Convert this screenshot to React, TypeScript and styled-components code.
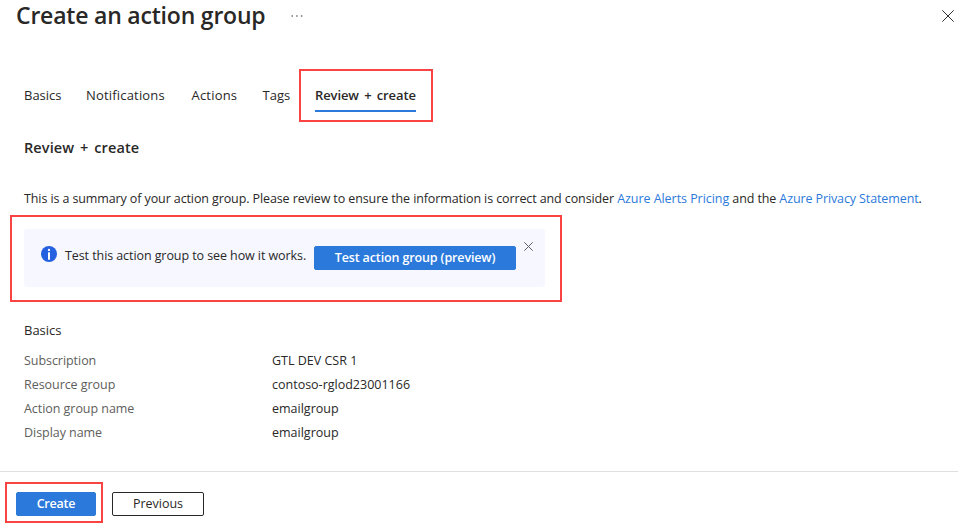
import React from 'react';
import styled, { createGlobalStyle } from 'styled-components';

const GlobalStyle = createGlobalStyle`
  * { box-sizing: border-box; }
  body {
    margin: 0;
    background: #fff;
    color: #292827;
    font-family: "Open Sans", "Noto Sans", sans-serif;
    font-size: 12.5px;
    overflow: hidden;
  }
`;

const Page = styled.main`
  position: relative;
  display: flex;
  flex-direction: column;
  width: 958px;
  height: 529px;
  overflow: hidden;
`;

const Header = styled.header`
  display: flex;
  align-items: center;
  height: 32px;
  padding: 0 4px 0 16px;
`;

const Title = styled.h1`
  width: 275px;
  margin: 0 0 2px;
  font-size: 23px;
  font-weight: 600;
  line-height: 30px;
  letter-spacing: -0.2px;
  white-space: nowrap;
`;

const IconButton = styled.button`
  display: flex;
  padding: 0;
  border: 0;
  background: none;
  color: #323130;
`;

const CloseButton = styled(IconButton)`
  margin-left: auto;
`;

const TabList = styled.nav`
  display: flex;
  gap: 25px;
  height: 34px;
  margin: 46px 0 0 24px;
`;

const Tab = styled.a<{ $width: number; $spacing?: number; $active?: boolean }>`
  width: ${(p) => p.$width}px;
  height: 34px;
  font-size: 13px;
  font-weight: ${(p) => (p.$active ? 600 : 400)};
  line-height: 34px;
  letter-spacing: ${(p) => p.$spacing ?? 0}px;
  word-spacing: 2px;
  white-space: nowrap;
  border-bottom: 2px solid ${(p) => (p.$active ? '#2b7adb' : 'transparent')};
`;

const Content = styled.section`
  display: flex;
  flex-direction: column;
  padding-left: 24px;
`;

const SectionTitle = styled.h2`
  margin: 26px 0 0;
  font-size: 14.5px;
  font-weight: 600;
  line-height: 20px;
  letter-spacing: 0.1px;
  word-spacing: 2px;
`;

const Summary = styled.p`
  margin: 31px 0 0;
  line-height: 20px;
  letter-spacing: -0.107px;
  white-space: nowrap;
`;

const Link = styled.a<{ $spacing: number }>`
  color: #2b7adb;
  letter-spacing: ${(p) => p.$spacing}px;
`;

const Banner = styled.div`
  display: flex;
  align-items: flex-start;
  width: 521px;
  height: 58px;
  margin-top: 20px;
  padding: 17px 12px 0 17px;
  border-radius: 3px;
  background: #f6f7ff;
`;

const BannerText = styled.span`
  width: 249px;
  flex: none;
  margin: 0 0 0 8px;
  line-height: 20px;
  letter-spacing: -0.08px;
  white-space: nowrap;
`;

const DismissButton = styled(IconButton)`
  margin: -4px 0 0 7.5px;
`;

const Button = styled.button<{ $width: number; $primary?: boolean; $spacing?: number }>`
  width: ${(p) => p.$width}px;
  height: 24px;
  flex: none;
  padding: 0;
  border: 1px solid ${(p) => (p.$primary ? '#2b7adb' : '#292827')};
  border-radius: 2px;
  background: ${(p) => (p.$primary ? '#2b7adb' : '#fff')};
  color: ${(p) => (p.$primary ? '#fff' : '#292827')};
  font: ${(p) => (p.$primary ? 600 : 400)} 12.5px/22px "Open Sans", "Noto Sans", sans-serif;
  letter-spacing: ${(p) => p.$spacing ?? 0}px;
  white-space: nowrap;
`;

const GroupTitle = styled.h3`
  margin: 33px 0 11px;
  font-size: 13px;
  font-weight: 400;
  line-height: 20px;
`;

const Details = styled.dl`
  display: grid;
  grid-template-columns: 248px auto;
  grid-auto-rows: 24px;
  margin: 0;
  line-height: 20px;
`;

const Term = styled.dt`
  color: #605e5c;
  letter-spacing: -0.05px;
`;

const Value = styled.dd`
  margin: 0;
`;

const Footer = styled.footer`
  display: flex;
  gap: 16px;
  height: 58px;
  margin-top: auto;
  padding: 20px 16px 0;
  border-top: 1px solid #e1dfdd;
`;

const Highlight = styled.div<{ $x: number; $y: number; $w: number; $h: number }>`
  position: absolute;
  left: ${(p) => p.$x}px;
  top: ${(p) => p.$y}px;
  width: ${(p) => p.$w}px;
  height: ${(p) => p.$h}px;
  border: 2px solid #fa4343;
  pointer-events: none;
`;

const CrossIcon = ({ size, color = '#323130' }: { size: number; color?: string }) => (
  <svg width={size} height={size} viewBox={`0 0 ${size} ${size}`} stroke={color} strokeWidth="1">
    <path d={`M.3.3 ${size - 0.3} ${size - 0.3}M${size - 0.3}.3.3 ${size - 0.3}`} />
  </svg>
);

const InfoIcon = () => (
  <svg width="16" height="16" viewBox="0 0 16 16">
    <circle cx="8" cy="8" r="8" fill="#2560e0" />
    <circle cx="8" cy="3.9" r="1.2" fill="#fff" />
    <rect x="7" y="6.3" width="2" height="7.4" fill="#fff" />
  </svg>
);

const MoreIcon = () => (
  <svg width="12" height="2" viewBox="0 0 12 2" fill="#605e5c">
    <rect x="0.5" y="0.3" width="1.4" height="1.4" />
    <rect x="5.2" y="0.3" width="1.4" height="1.4" />
    <rect x="9.9" y="0.3" width="1.4" height="1.4" />
  </svg>
);

const tabs = [
  { label: 'Basics', width: 37 },
  { label: 'Notifications', width: 80.5, spacing: 0.18 },
  { label: 'Actions', width: 46, spacing: 0.2 },
  { label: 'Tags', width: 27.5 },
  { label: 'Review + create', width: 101, spacing: -0.1, active: true },
];

const details = [
  ['Subscription', 'GTL DEV CSR 1'],
  ['Resource group', 'contoso-rglod23001166'],
  ['Action group name', 'emailgroup'],
  ['Display name', 'emailgroup'],
];

export default function App() {
  return (
    <>
      <GlobalStyle />
      <Page>
        <Header>
          <Title>Create an action group</Title>
          <IconButton aria-label="More"><MoreIcon /></IconButton>
          <CloseButton aria-label="Close"><CrossIcon size={12} /></CloseButton>
        </Header>
        <TabList>
          {tabs.map((t) => (
            <Tab key={t.label} $width={t.width} $spacing={t.spacing} $active={t.active}>{t.label}</Tab>
          ))}
        </TabList>
        <Content>
          <SectionTitle>Review + create</SectionTitle>
          <Summary>
            This is a summary of your action group. Please review to ensure the information is correct and consider{' '}
            <Link $spacing={-0.05}>Azure Alerts Pricing</Link> and the{' '}
            <Link $spacing={-0.11}>Azure Privacy Statement</Link>.
          </Summary>
          <Banner>
            <InfoIcon />
            <BannerText>Test this action group to see how it works.</BannerText>
            <Button $width={202} $primary $spacing={-0.13}>Test action group (preview)</Button>
            <DismissButton aria-label="Dismiss"><CrossIcon size={9} color="#605e6c" /></DismissButton>
          </Banner>
          <GroupTitle>Basics</GroupTitle>
          <Details>
            {details.map(([term, value]) => (
              <React.Fragment key={term}>
                <Term>{term}</Term>
                <Value>{value}</Value>
              </React.Fragment>
            ))}
          </Details>
        </Content>
        <Footer>
          <Button $width={80} $primary $spacing={-0.2}>Create</Button>
          <Button $width={92}>Previous</Button>
        </Footer>
        <Highlight $x={299} $y={69} $w={134} $h={53} />
        <Highlight $x={10} $y={215} $w={552} $h={87} />
        <Highlight $x={5} $y={482} $w={98} $h={41} />
      </Page>
    </>
  );
}
